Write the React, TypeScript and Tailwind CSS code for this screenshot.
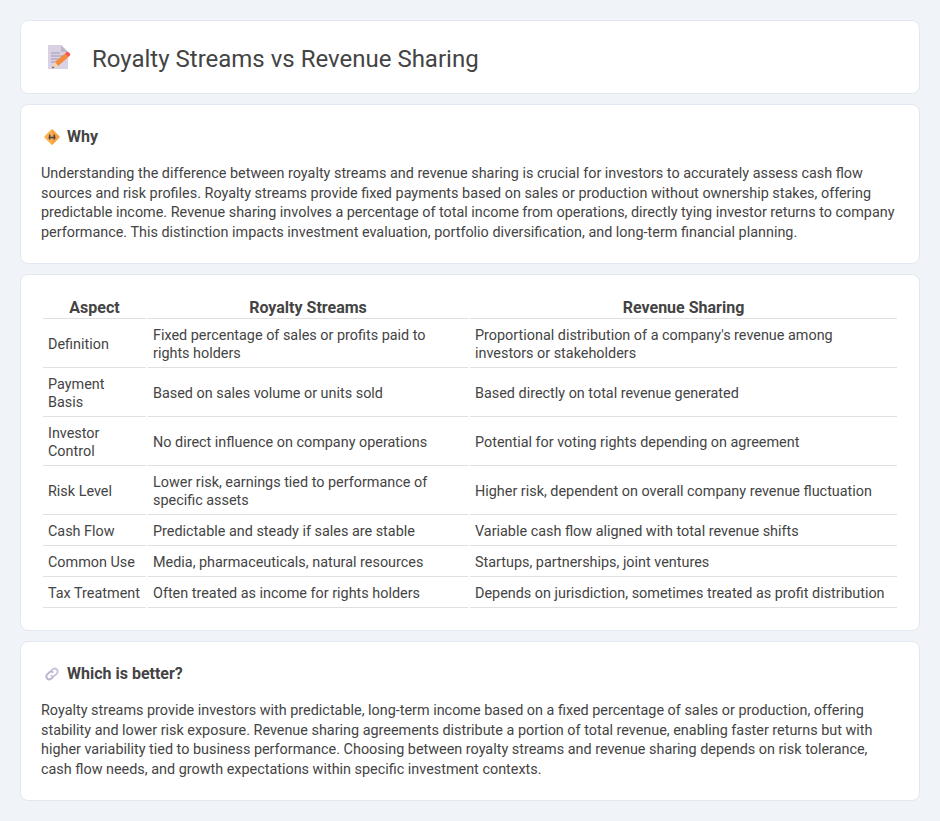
import React from 'react';

const rows = [
  ['Definition', 'Fixed percentage of sales or profits paid to rights holders', "Proportional distribution of a company's revenue among investors or stakeholders"],
  ['Payment Basis', 'Based on sales volume or units sold', 'Based directly on total revenue generated'],
  ['Investor Control', 'No direct influence on company operations', 'Potential for voting rights depending on agreement'],
  ['Risk Level', 'Lower risk, earnings tied to performance of specific assets', 'Higher risk, dependent on overall company revenue fluctuation'],
  ['Cash Flow', 'Predictable and steady if sales are stable', 'Variable cash flow aligned with total revenue shifts'],
  ['Common Use', 'Media, pharmaceuticals, natural resources', 'Startups, partnerships, joint ventures'],
  ['Tax Treatment', 'Often treated as income for rights holders', 'Depends on jurisdiction, sometimes treated as profit distribution'],
];

const DocIcon = () => (
  <svg width="24" height="24" viewBox="0 0 24 24" className="block">
    <path d="M1 0h13l7 7v17H1z" fill="#d9d2e4" />
    <path d="M14 0l7 7h-7z" fill="#bfb6cc" />
    <path d="M4 8h9M4 11h12M4 14h10M4 17h6" stroke="#a39aa8" strokeWidth="1.2" />
    <path d="M8 17L18 8.500l3.500 3.500L11 21z" fill="#f58a3c" />
    <path d="M18 8.500l1.500-1.300a1.500 1.500 0 0 1 2 0l1.300 1.300a1.500 1.500 0 0 1 0 2.100L21.500 12z" fill="#f4544d" />
    <path d="M8 17l3 4-6 2.500z" fill="#f6d3a8" />
    <path d="M5 23.500l.8-2.300 1.600 1.300z" fill="#6b4a3a" />
  </svg>
);

const DiamondIcon = () => (
  <svg width="16" height="16" viewBox="0 0 16 16" className="block">
    <rect x="2.200" y="2.200" width="11.600" height="11.600" rx="1.500" transform="rotate(45 8 8)" fill="#fbb24e" />
    <path d="M8 .2L15.800 8 8 15.800z" fill="#f59a3a" opacity="0.6" />
    <path d="M5.700 5.500v5M10.300 5.500v5M4.500 8.500h7" stroke="#4b4550" strokeWidth="1.500" />
  </svg>
);

const LinkIcon = () => (
  <svg width="16" height="16" viewBox="0 0 16 16" fill="none" className="block">
    <path d="M6.800 5.200l2-2a3 3 0 0 1 4.200 4.200l-2 2a3 3 0 0 1-4.200 0" stroke="#cbc3da" strokeWidth="1.900" />
    <path d="M9.200 10.800l-2 2A3 3 0 0 1 3 8.600l2-2a3 3 0 0 1 4.200 0" stroke="#bdb4cf" strokeWidth="1.900" />
  </svg>
);

const App = () => {
  return (
    <div className="min-h-[821px] bg-[#f0f4f8] px-5 py-5 font-['Roboto',sans-serif] text-[14.4px] leading-[19.6px] text-[#444]">
      <div className="flex h-[74px] items-center rounded-lg border border-[#e2e8f0] bg-white pl-[26px]">
        <DocIcon />
        <h1 className="mt-[3px] ml-[21px] text-[24px] leading-[32px] font-normal text-[#444]">Royalty Streams vs Revenue Sharing</h1>
      </div>

      <div className="mt-[10px] h-[160px] rounded-lg border border-[#e2e8f0] bg-white px-5 pt-[21px]">
        <div className="flex h-[22px] items-center pl-[3px]">
          <DiamondIcon />
          <h2 className="ml-[7px] text-[16px] leading-[22px] font-bold">Why</h2>
        </div>
        <p className="mt-[16px]">
          Understanding the difference between royalty streams and revenue sharing is crucial for investors to accurately assess cash flow sources and risk profiles. Royalty streams provide fixed payments based on sales or production without ownership stakes, offering predictable income. Revenue sharing involves a percentage of total income from operations, directly tying investor returns to company performance. This distinction impacts investment evaluation, portfolio diversification, and long-term financial planning.
        </p>
      </div>

      <div className="mt-[10px] h-[357px] rounded-lg border border-[#e2e8f0] bg-white px-5 pt-[20px]">
        <table className="w-full table-fixed border-separate border-spacing-[2px] leading-[18px]">
          <colgroup>
            <col className="w-[103px]" />
            <col className="w-[320px]" />
            <col />
          </colgroup>
          <thead>
            <tr>
              <th className="border-b border-[#e0e0e0] px-[5px] pt-[2px] pb-[1px] text-center text-[16px] font-bold">Aspect</th>
              <th className="border-b border-[#e0e0e0] px-[5px] pt-[2px] pb-[1px] text-center text-[16px] font-bold">Royalty Streams</th>
              <th className="border-b border-[#e0e0e0] px-[5px] pt-[2px] pb-[1px] text-center text-[16px] font-bold">Revenue Sharing</th>
            </tr>
          </thead>
          <tbody>
            {rows.map((row) => (
              <tr key={row[0]}>
                {row.map((cell, i) => (
                  <td key={i} className="border-b border-[#e0e0e0] px-[5px] pt-[6px] pb-[4px] text-left align-middle">{cell}</td>
                ))}
              </tr>
            ))}
          </tbody>
        </table>
      </div>

      <div className="mt-[10px] h-[160px] rounded-lg border border-[#e2e8f0] bg-white px-5 pt-[21px]">
        <div className="flex h-[22px] items-center pl-[3px]">
          <LinkIcon />
          <h2 className="ml-[7px] text-[16px] leading-[22px] font-bold">Which is better?</h2>
        </div>
        <p className="mt-[16px]">
          Royalty streams provide investors with predictable, long-term income based on a fixed percentage of sales or production, offering stability and lower risk exposure. Revenue sharing agreements distribute a portion of total revenue, enabling faster returns but with higher variability tied to business performance. Choosing between royalty streams and revenue sharing depends on risk tolerance, cash flow needs, and growth expectations within specific investment contexts.
        </p>
      </div>
    </div>
  );
};

export default App;
